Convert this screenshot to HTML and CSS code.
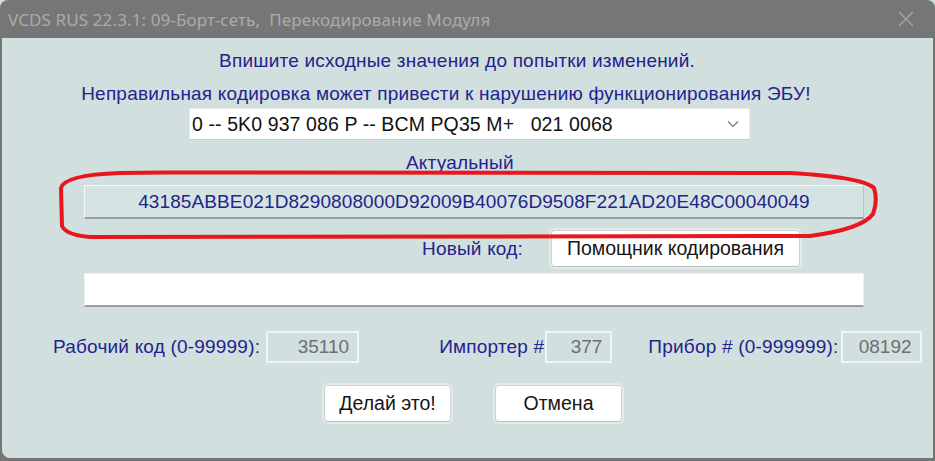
FILE: index.html
```html
<!DOCTYPE html>
<html lang="ru">
<head>
<meta charset="UTF-8">
<meta name="viewport" content="width=device-width, initial-scale=1.0">
<title>VCDS Перекодирование Модуля</title>
<link rel="stylesheet" href="styles.css">
</head>
<body>

<div class="window">

  <div class="titlebar">
    <span class="title">VCDS RUS 22.3.1: 09-Борт-сеть,&nbsp; Перекодирование Модуля</span>
    <svg class="close" width="16" height="16" viewBox="0 0 16 16">
      <path d="M1 1 L15 15 M15 1 L1 15" stroke="#a9a9a9" stroke-width="1.2" fill="none"/>
    </svg>
  </div>

  <div class="content">
    <p class="msg msg-first">Впишите исходные значения до попытки изменений.</p>
    <p class="msg msg-second">Неправильная кодировка может привести к нарушению функционирования ЭБУ!</p>

    <div class="select">
      <span>0 -- 5K0 937 086 P -- BCM PQ35 M+&nbsp;&nbsp; 021 0068</span>
      <svg class="chevron" width="12" height="8" viewBox="0 0 12 8">
        <path d="M1 1.5 L6 6.5 L11 1.5" stroke="#777" stroke-width="1.2" fill="none"/>
      </svg>
    </div>

    <p class="label-current">Актуальный</p>
    <div class="code-field current">43185ABBE021D8290808000D92009B40076D9508F221AD20E48C00040049</div>

    <div class="new-row">
      <span class="label">Новый код:</span>
      <button class="btn btn-helper">Помощник кодирования</button>
    </div>
    <div class="code-field new-code"></div>

    <div class="params">
      <span class="label">Рабочий код (0-99999):</span>
      <span class="num num-wsc">35110</span>
      <span class="label label-imp">Импортер #</span>
      <span class="num num-imp">377</span>
      <span class="label label-dev">Прибор # (0-999999):</span>
      <span class="num num-dev">08192</span>
    </div>

    <div class="actions">
      <button class="btn btn-go">Делай это!</button>
      <button class="btn btn-cancel">Отмена</button>
    </div>

    <!-- red marker drawn over the screenshot -->
    <svg class="marker" width="935" height="461" viewBox="0 0 935 461">
      <path d="M165 172.5 L790 173 Q862 177 874 188 Q878 201 873 214 Q862 229 810 236 L90 237 Q66 235 62 226 L61 188 Q64 175 120 173 Z"
            stroke="#e8161e" stroke-width="4" fill="none"/>
    </svg>
  </div>

</div>

</body>
</html>
```

FILE: styles.css
```css
* {
  box-sizing: border-box;
  padding: 0;
  margin: 0;
}

html, body {
  height: 100%;
  width: 100%;
  overflow: hidden;
}

body {
  background: #d1dfdf;
  font-family: "Liberation Sans", Arial, sans-serif;
}

.window {
  height: 461px;
  display: flex;
  flex-direction: column;
  background: #767676;
  border-radius: 8px 8px 0 0;
  padding: 0 2px 3px 2px;
}

.titlebar {
  height: 38px;
  flex: none;
  display: flex;
  align-items: center;
  justify-content: space-between;
  padding: 0 19px 0 6px;
}

.title {
  font-family: "Noto Sans", sans-serif;
  font-size: 17px;
  letter-spacing: 0.12px;
  color: #ababab;
  white-space: nowrap;
  margin-top: 1px;
}

.close {
  display: block;
}

.content {
  flex: 1;
  position: relative;
  display: flex;
  flex-direction: column;
  background: #d1dfdf;
  border-radius: 0 0 0 8px;
  color: #23238c;
  font-size: 19px;
  letter-spacing: 0.2px;
}

.msg {
  text-align: center;
  line-height: 22px;
  white-space: nowrap;
}

.msg-first {
  margin-top: 12px;
  padding-right: 21px;
}

.msg-second {
  margin-top: 11px;
  padding-right: 43px;
}

.select {
  margin: 3px 0 0 187px;
  width: 561px;
  height: 32px;
  background: #fff;
  border: 1px solid #e6eaea;
  border-bottom: 1px solid #c8cccc;
  display: flex;
  align-items: center;
  justify-content: space-between;
  padding: 0 10px 0 2px;
  color: #111;
  font-size: 19.5px;
  letter-spacing: 0.1px;
  white-space: pre;
}

.label-current {
  margin: 12px 0 0 404px;
  line-height: 22px;
}

.code-field {
  margin-left: 82px;
  width: 780px;
  height: 34px;
}

.current {
  margin-top: 11px;
  background: #d6e3e3;
  border: 1px solid #f3f7f7;
  border-right-color: #b9c1c1;
  border-bottom: 2px solid #9b9e9e;
  display: flex;
  align-items: center;
  justify-content: center;
  font-size: 19px;
  letter-spacing: 0.1px;
}

.new-row {
  margin-top: 11px;
  display: flex;
  align-items: center;
  justify-content: flex-end;
  padding-right: 133px;
  gap: 28px;
}

.new-code {
  margin-top: 6px;
  background: #fff;
  border: 1px solid #eef2f2;
  border-bottom: 2px solid #9b9e9e;
}

.label {
  white-space: nowrap;
}

.btn {
  font-family: "Liberation Sans", Arial, sans-serif;
  font-size: 19.5px;
  color: #161616;
  background: #fff;
  border: 1px solid #cfd2d2;
  border-bottom-color: #b9bcbc;
  border-radius: 4px;
  box-shadow: 0 0 0 2px #e6e9e9;
}

.btn-helper {
  width: 249px;
  height: 37px;
}

.params {
  margin-top: 24px;
  display: flex;
  align-items: center;
  padding-left: 51px;
}

.num {
  height: 32px;
  border: 2px solid #eff4f4;
  display: flex;
  align-items: center;
  justify-content: flex-end;
  padding-right: 8px;
  color: #6f6f6f;
  font-size: 19px;
  letter-spacing: 0;
}

.num-wsc {
  width: 93px;
  margin-left: 6px;
}

.label-imp {
  margin-left: 80px;
}

.num-imp {
  width: 67px;
  margin-left: 1px;
}

.label-dev {
  margin-left: 36px;
}

.num-dev {
  width: 81px;
  margin-left: 2px;
}

.actions {
  margin-top: 22px;
  display: flex;
  padding-left: 322px;
  gap: 44px;
}

.btn-go,
.btn-cancel {
  width: 127px;
  height: 37px;
}

.marker {
  position: absolute;
  left: -2px;
  top: -38px;
  pointer-events: none;
}
```
